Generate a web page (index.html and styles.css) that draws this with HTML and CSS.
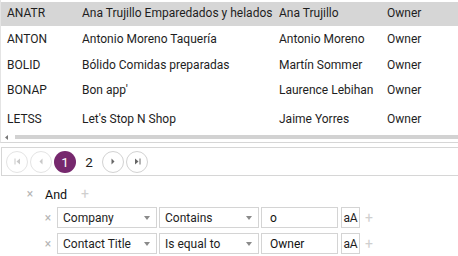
FILE: index.html
```html
<!DOCTYPE html>
<html>
<head>
<meta charset="utf-8">
<link rel="stylesheet" href="styles.css">
</head>
<body>
<div class="grid">
  <div class="rows">
    <div class="row sel"><span>ANATR</span><span>Ana Trujillo Emparedados y helados</span><span>Ana Trujillo</span><span>Owner</span></div>
    <div class="row"><span>ANTON</span><span>Antonio Moreno Taquería</span><span>Antonio Moreno</span><span>Owner</span></div>
    <div class="row"><span>BOLID</span><span>Bólido Comidas preparadas</span><span>Martín Sommer</span><span>Owner</span></div>
    <div class="row"><span>BONAP</span><span>Bon app'</span><span>Laurence Lebihan</span><span>Owner</span></div>
    <div class="row last"><span>LETSS</span><span>Let's Stop N Shop</span><span>Jaime Yorres</span><span>Owner</span></div>
  </div>
  <div class="hscroll">
    <svg class="harrow" width="3" height="5" viewBox="0 0 3 5"><path d="M3 0 L0 2.5 L3 5 Z" fill="#777"/></svg>
    <div class="thumb"></div>
  </div>
</div>
<div class="pager">
  <span class="pbtn dis"><svg width="7" height="7" viewBox="0 0 7 7"><rect x="0.5" y="0.5" width="1" height="6" fill="#c8c8c8"/><path d="M6 0.5 L2.5 3.5 L6 6.5 Z" fill="#c8c8c8"/></svg></span>
  <span class="pbtn dis"><svg width="4" height="7" viewBox="0 0 4 7"><path d="M3.5 0.5 L0.5 3.5 L3.5 6.5 Z" fill="#c8c8c8"/></svg></span>
  <span class="pnum cur">1</span>
  <span class="pnum">2</span>
  <span class="pbtn"><svg width="4" height="7" viewBox="0 0 4 7"><path d="M0.5 0.5 L3.5 3.5 L0.5 6.5 Z" fill="#666"/></svg></span>
  <span class="pbtn"><svg width="7" height="7" viewBox="0 0 7 7"><path d="M1 0.5 L4.5 3.5 L1 6.5 Z" fill="#666"/><rect x="5.5" y="0.5" width="1" height="6" fill="#666"/></svg></span>
</div>
<div class="filter">
  <div class="ghead">
    <span class="x">×</span>
    <span class="op">And</span>
    <span class="plus">+</span>
  </div>
  <div class="cond">
    <span class="x">×</span>
    <span class="dd"><span>Company</span><i class="tri"></i></span>
    <span class="dd"><span>Contains</span><i class="tri"></i></span>
    <span class="tb">o</span>
    <span class="case">aA</span>
    <span class="plus">+</span>
  </div>
  <div class="cond">
    <span class="x">×</span>
    <span class="dd"><span>Contact Title</span><i class="tri"></i></span>
    <span class="dd"><span>Is equal to</span><i class="tri"></i></span>
    <span class="tb">Owner</span>
    <span class="case">aA</span>
    <span class="plus">+</span>
  </div>
</div>
</body>
</html>
```
FILE: styles.css
```css
html, body {
  margin: 0;
  padding: 0;
  background: #fff;
}
body {
  width: 458px;
  height: 256px;
  overflow: hidden;
  font-family: Roboto, "Open Sans", sans-serif;
  font-size: 12px;
  color: #1e1e1e;
}
.grid {
  border-left: 1px solid #e4e4e4;
  border-bottom: 1px solid #d6d6d6;
}
.rows {
  padding-top: 2px;
}
.row {
  display: grid;
  grid-template-columns: 75px 197px 108px 1fr;
  padding-left: 6px;
  height: 25px;
  align-items: center;
  white-space: nowrap;
}
.row.sel {
  height: 22px;
  background: #d6d6d6;
  padding-bottom: 2px;
}
.row.sel + .row {
  height: 26px;
}
.row.last {
  height: 30px;
  padding-top: 3px;
  box-sizing: border-box;
}
.hscroll {
  height: 10px;
  display: flex;
  align-items: center;
  padding-left: 4px;
  gap: 7px;
}
.harrow {
  display: block;
}
.thumb {
  flex: 1;
  height: 4px;
  background: #d2d2d2;
}
.pager {
  margin: 4px 0 0 1px;
  height: 27px;
  border: 1px solid #d6d6d6;
  border-right: none;
  display: flex;
  align-items: center;
  padding-left: 4px;
  gap: 2px;
}
.pbtn, .pnum {
  width: 22px;
  height: 22px;
  box-sizing: border-box;
  border-radius: 50%;
  display: flex;
  align-items: center;
  justify-content: center;
}
.pbtn {
  border: 1px solid #d2d2d2;
}
.pbtn.dis {
  border-color: #e4e4e4;
}
.pbtn svg {
  display: block;
}
.pnum {
  font-size: 13.5px;
  color: #222;
}
.pnum.cur {
  background: #76286d;
  color: #fff;
}
.filter {
  padding-top: 8px;
}
.ghead {
  display: flex;
  align-items: center;
  height: 20px;
  padding-left: 25px;
}
.x {
  color: #b4b4b4;
  font-size: 12px;
  width: 10px;
  text-align: center;
}
.ghead .op {
  margin-left: 10px;
  color: #111;
  font-size: 12.5px;
}
.plus {
  color: #cfcfcf;
  font-size: 14px;
}
.ghead .plus {
  margin-left: 14px;
}
.cond {
  display: flex;
  align-items: center;
  height: 21px;
  margin-top: 3px;
  padding-left: 43px;
}
.cond + .cond {
  margin-top: 5px;
}
.cond .x {
  margin-right: 4px;
}
.dd, .tb, .case {
  box-sizing: border-box;
  height: 21px;
  border: 1px solid #d4d4d4;
  display: flex;
  align-items: center;
}
.dd {
  width: 100px;
  padding: 0 6px 0 5px;
  justify-content: space-between;
  margin-right: 2px;
}
.tri {
  width: 0;
  height: 0;
  border-left: 3px solid transparent;
  border-right: 3px solid transparent;
  border-top: 4px solid #8a8a8a;
}
.tb {
  width: 77px;
  padding-left: 8px;
  margin-right: 3px;
  color: #111;
}
.case {
  width: 19px;
  justify-content: center;
  padding: 0;
  letter-spacing: -0.3px;
}
.cond .plus {
  margin-left: 5px;
}
```
